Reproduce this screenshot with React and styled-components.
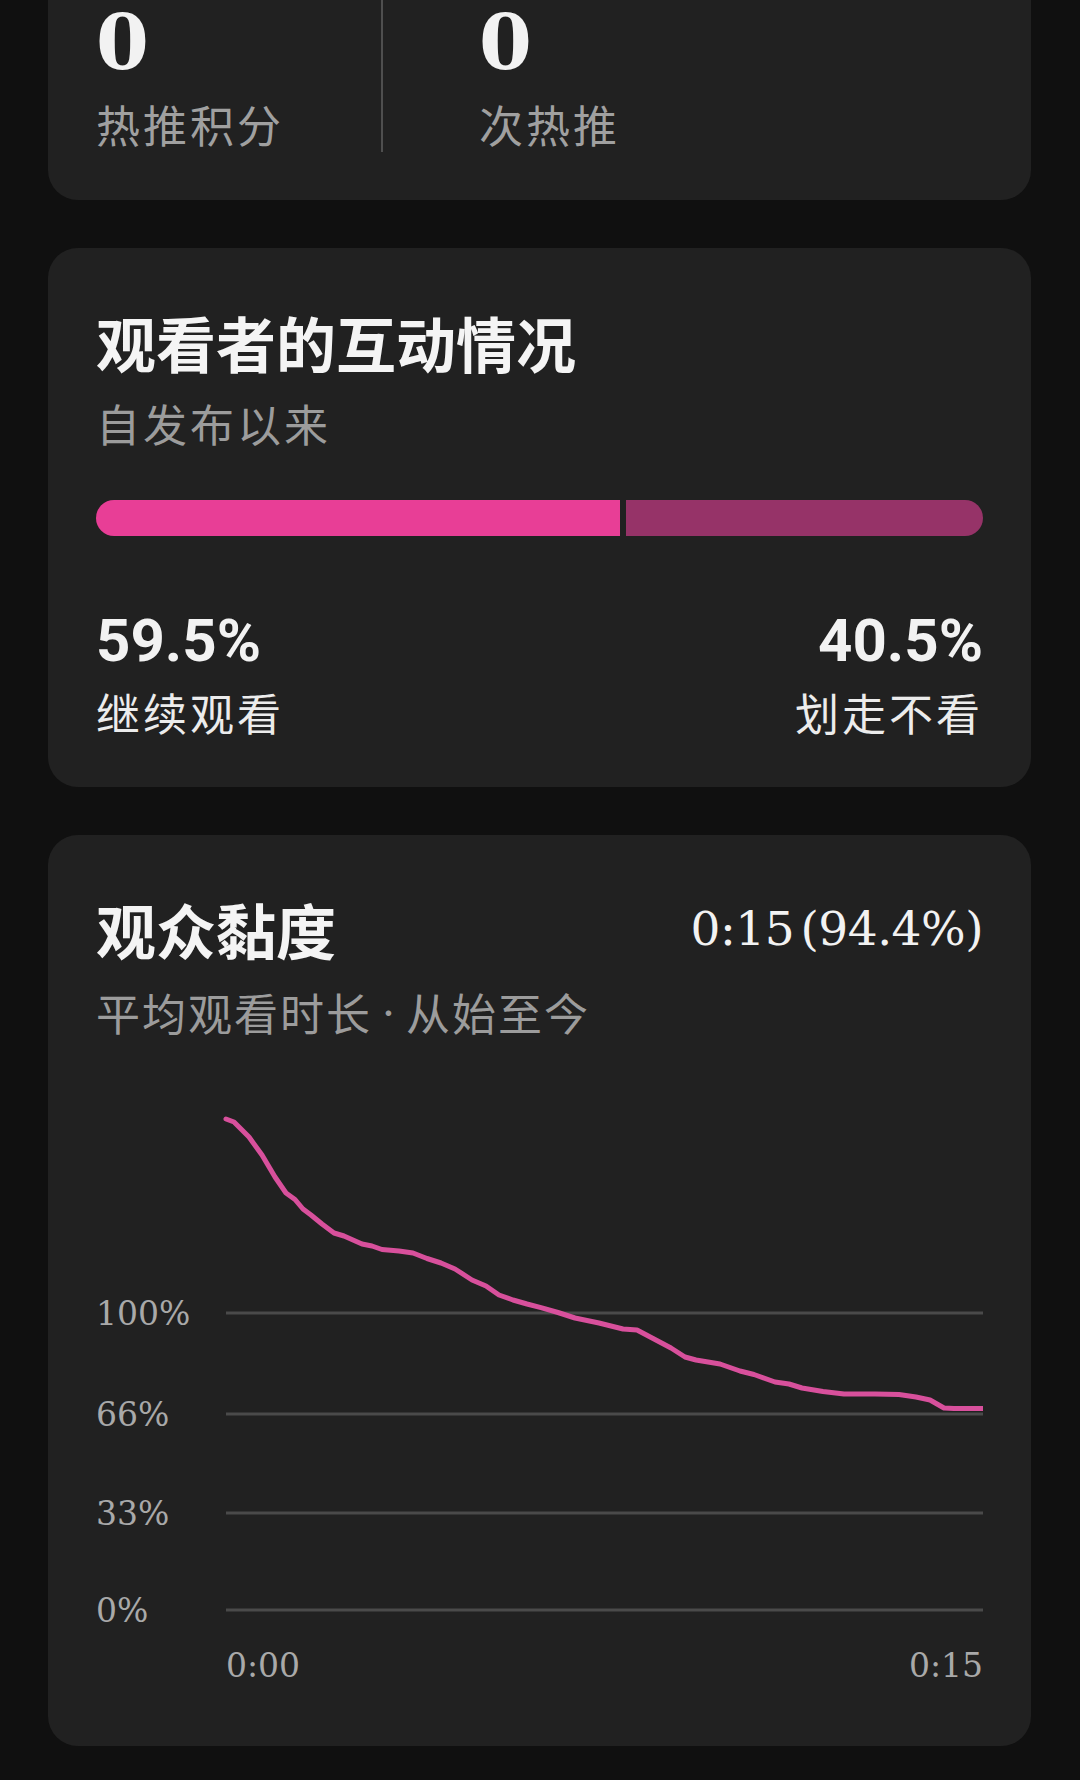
import React from 'react';
import styled, {createGlobalStyle} from 'styled-components';

const GlobalStyle = createGlobalStyle`
    html, body {
        margin: 0;
        padding: 0;
        background: #101010;
    }
    body {
        font-family: "Noto Sans CJK SC", sans-serif;
        color: #f2f2f2;
    }
`;

const curve = [
    [130, 30], [138, 33], [153, 48], [166, 66], [179, 88], [190, 104], [199, 110.5],
    [207, 120], [215, 126], [226, 135], [238, 144], [248, 147], [266, 155], [276, 157],
    [286, 160.5], [303, 162], [317, 164], [331, 169.5], [345, 174], [359, 180], [376, 191],
    [390, 197], [403, 206], [417, 211], [431, 215], [445, 218.6], [462, 223.5], [479, 229],
    [503, 234], [527, 240], [541, 241], [558, 250], [575, 259], [589, 268], [600, 271],
    [624, 275], [644, 282], [658, 285.5], [679, 293], [693, 295], [706, 299], [727, 302.5],
    [748, 305], [779, 305], [803, 305.6], [820, 308], [834, 311], [848, 319], [858, 319.5],
    [887, 319.5],
];

const gridRows = [
    {label: '100%', y: 224},
    {label: '66%', y: 325},
    {label: '33%', y: 424},
    {label: '0%', y: 521},
];

const StickinessChart = () => (
    <ChartSvg viewBox="0 0 887 610" width="887" height="610">
        {gridRows.map(row => (
            <g key={row.label}>
                <line x1="130" x2="887" y1={row.y} y2={row.y} stroke="#4a4a4a" strokeWidth="3" />
                <text x="0" y={row.y + 12} className="axis">{row.label}</text>
            </g>
        ))}
        <polyline
            points={curve.map(p => p.join(',')).join(' ')}
            fill="none"
            stroke="#d8509c"
            strokeWidth="5"
            strokeLinejoin="round"
            strokeLinecap="round"
        />
        <text x="130" y="588" className="axis">0:00</text>
        <text x="887" y="588" textAnchor="end" className="axis">0:15</text>
    </ChartSvg>
);

const App = () => {
    const keep = 59.5;
    const swipe = 40.5;

    return (
        <Page>
            <GlobalStyle />
            <HotCard>
                <StatRow>
                    <StatCell>
                        <BigNumber>0</BigNumber>
                        <StatLabel>热推积分</StatLabel>
                    </StatCell>
                    <VDivider />
                    <StatCell $second>
                        <BigNumber>0</BigNumber>
                        <StatLabel>次热推</StatLabel>
                    </StatCell>
                </StatRow>
            </HotCard>

            <Card>
                <Title>观看者的互动情况</Title>
                <Subtitle $gap={17} $spacing={3}>自发布以来</Subtitle>
                <Bar>
                    <BarPart $color="#e83e96" style={{flexGrow: keep}} />
                    <BarPart $color="#963368" style={{flexGrow: swipe}} />
                </Bar>
                <Split>
                    <SplitSide>
                        <Percent>{keep}%</Percent>
                        <SplitLabel>继续观看</SplitLabel>
                    </SplitSide>
                    <SplitSide $right>
                        <Percent>{swipe}%</Percent>
                        <SplitLabel>划走不看</SplitLabel>
                    </SplitSide>
                </Split>
            </Card>

            <Card $bottom={47}>
                <Header>
                    <Title>观众黏度</Title>
                    <HeaderValue>0:15 (94.4%)</HeaderValue>
                </Header>
                <Subtitle $gap={19} $spacing={2}>平均观看时长<Dot>·</Dot>从始至今</Subtitle>
                <ChartWrap>
                    <StickinessChart />
                </ChartWrap>
            </Card>
        </Page>
    );
};

const Page = styled.div`
    display: flex;
    flex-direction: column;
    gap: 48px;
    padding: 0 49px 40px 48px;
`;

const Card = styled.section`
    background: #212121;
    border-radius: 30px;
    padding: 58px 48px ${p => p.$bottom || 46}px;
`;

const HotCard = styled(Card)`
    border-radius: 0 0 30px 30px;
    padding-top: 0;
    padding-bottom: 48px;
`;

const StatRow = styled.div`
    display: flex;
    align-items: stretch;
`;

const StatCell = styled.div`
    display: flex;
    flex-direction: column;
    flex: ${p => p.$second ? '1 1 auto' : '0 0 285px'};
    padding-top: 5px;
    padding-left: ${p => p.$second ? '96px' : '0'};
`;

const VDivider = styled.div`
    width: 2px;
    background: #4f4f4f;
`;

const BigNumber = styled.div`
    font-family: "DejaVu Serif", serif;
    font-weight: 700;
    font-size: 76px;
    line-height: 76px;
    color: #f2f2f2;
`;

const StatLabel = styled.div`
    margin-top: 15px;
    font-size: 44px;
    line-height: 56px;
    letter-spacing: 3px;
    color: #a0a0a0;
`;

const Title = styled.h2`
    margin: 0;
    font-size: 60px;
    line-height: 71px;
    font-weight: 700;
    color: #f4f4f4;
`;

const Subtitle = styled.div`
    margin-top: ${p => p.$gap}px;
    font-size: 44px;
    line-height: 58px;
    letter-spacing: ${p => p.$spacing}px;
    color: #9c9c9c;
`;

const Dot = styled.span`
    display: inline-block;
    margin: 0 -6px;
    transform: scale(0.6);
`;

const Bar = styled.div`
    display: flex;
    gap: 6px;
    height: 36px;
    margin-top: 48px;
    border-radius: 18px;
    overflow: hidden;
`;

const BarPart = styled.div`
    flex-basis: 0;
    background: ${p => p.$color};
`;

const Split = styled.div`
    display: flex;
    justify-content: space-between;
    margin-top: 70px;
`;

const SplitSide = styled.div`
    display: flex;
    flex-direction: column;
    align-items: ${p => p.$right ? 'flex-end' : 'flex-start'};
`;

const Percent = styled.div`
    font-family: Roboto, "Liberation Sans", sans-serif;
    font-weight: 700;
    font-size: 60px;
    line-height: 69px;
    color: #f2f2f2;
`;

const SplitLabel = styled.div`
    margin-top: 8px;
    font-size: 44px;
    line-height: 58px;
    letter-spacing: 3px;
    color: #ececec;
`;

const Header = styled.div`
    display: flex;
    align-items: center;
    justify-content: space-between;
`;

const HeaderValue = styled.div`
    font-family: "DejaVu Serif", serif;
    font-size: 47px;
    line-height: 53px;
    letter-spacing: -0.5px;
    word-spacing: -8px;
    color: #f2f2f2;
`;

const ChartWrap = styled.div`
    margin-top: 48px;
`;

const ChartSvg = styled.svg`
    display: block;

    .axis {
        font-family: "DejaVu Serif", serif;
        font-size: 33px;
        fill: #a9a9a9;
    }
`;

export default App;
